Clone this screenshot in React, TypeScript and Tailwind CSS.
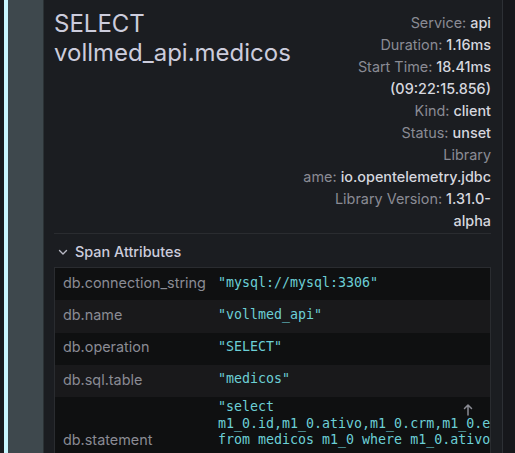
import React from "react";

const metaLines: { label?: string; value?: string }[] = [
  { label: "Service:", value: "api" },
  { label: "Duration:", value: "1.16ms" },
  { label: "Start Time:", value: "18.41ms" },
  { value: "(09:22:15.856)" },
  { label: "Kind:", value: "client" },
  { label: "Status:", value: "unset" },
  { label: "Library" },
  { label: "ame:", value: "io.opentelemetry.jdbc" },
  { label: "Library Version:", value: "1.31.0-" },
  { value: "alpha" },
];

const rows: { key: string; value: string; bg: string }[] = [
  { key: "db.connection_string", value: '"mysql://mysql:3306"', bg: "bg-[#0f1011]" },
  { key: "db.name", value: '"vollmed_api"', bg: "bg-[#19191b]" },
  { key: "db.operation", value: '"SELECT"', bg: "bg-[#0f1011]" },
  { key: "db.sql.table", value: '"medicos"', bg: "bg-[#19191b]" },
];

export default function App() {
  return (
    <div className="flex h-[453px] w-[515px] overflow-hidden bg-[#15161a] font-['Inter','Liberation_Sans',sans-serif]">
      <div className="w-[4px] shrink-0 bg-[#181b1f]" />
      <div className="w-[4px] shrink-0 bg-[#c9f7ff]" />
      <div className="w-[36px] shrink-0 border-r border-[#2b3235] bg-[#3e484d]" />
      <div className="w-[458px] shrink-0 bg-[#1b1d21] pl-[10px] pr-[11px] pt-[9px]">
        <div className="flex justify-between">
          <div className="text-[24px] leading-[29px] text-[#ccccdc]">
            <div>SELECT</div>
            <div>vollmed_api.medicos</div>
          </div>
          <div className="mt-[3px] text-right text-[14.4px] leading-[22px]">
            {metaLines.map((l, i) => (
              <div key={i} className="whitespace-nowrap">
                {l.label && <span className="text-[#8a8b94]">{l.label}</span>}
                {l.label && l.value && " "}
                {l.value && <span className="font-medium text-[#d6d7df]">{l.value}</span>}
              </div>
            ))}
          </div>
        </div>
        <div className="mt-[1px] border-t border-[#2a2c30]" />
        <div className="flex h-[33px] items-center pt-[2px]">
          <svg width="12" height="12" viewBox="0 0 12 12" className="ml-[3px]">
            <path d="M2.5 4.5 L6 8 L9.5 4.5" fill="none" stroke="#b8b9c4" strokeWidth="1.4" strokeLinecap="round" strokeLinejoin="round" />
          </svg>
          <span className="ml-[6px] text-[14.4px] font-medium leading-[20px] text-[#ccccdc]">Span Attributes</span>
        </div>
        <div className="overflow-hidden border border-[#2a2c30]">
          {rows.map((r) => (
            <div key={r.key} className={`flex h-[32.25px] items-center pb-[3px] ${r.bg}`}>
              <div className="w-[155px] shrink-0 pl-[8px] text-[14.4px] text-[#8a8b94]">{r.key}</div>
              <div className="whitespace-nowrap pl-[8px] font-['DejaVu_Sans_Mono',monospace] text-[13.3px] text-[#6ccfd6]">
                {r.value}
              </div>
            </div>
          ))}
          <div className="relative flex min-h-[86px] items-center bg-[#0f1011]">
            <div className="w-[155px] shrink-0 self-center pl-[8px] text-[14.4px] text-[#8a8b94]">db.statement</div>
            <div className="self-start whitespace-nowrap py-[2px] pl-[8px] font-['DejaVu_Sans_Mono',monospace] text-[13.3px] leading-[16.5px] text-[#6ccfd6]">
              <div>"select</div>
              <div>m1_0.id,m1_0.ativo,m1_0.crm,m1_0.email,m1_0.especialidade</div>
              <div>from medicos m1_0 where m1_0.ativo=? order by m1_0.nome</div>
            </div>
            <svg width="10" height="13" viewBox="0 0 10 13" className="absolute right-[17px] top-[6px]">
              <path d="M5 12 V2 M1.5 5.5 L5 2 L8.5 5.5" fill="none" stroke="#8a8b94" strokeWidth="1.5" strokeLinecap="round" strokeLinejoin="round" />
            </svg>
          </div>
        </div>
      </div>
      <div className="w-px shrink-0 bg-[#2d3035]" />
      <div className="w-[12px] shrink-0 bg-[#16171b]" />
    </div>
  );
}
